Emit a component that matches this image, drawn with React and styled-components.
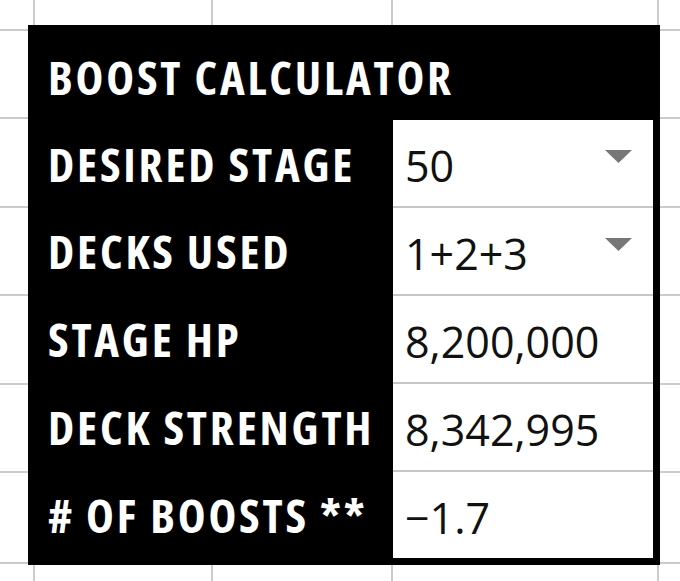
import React from 'react';
import styled, { createGlobalStyle } from 'styled-components';

const GlobalStyle = createGlobalStyle`
  body {
    margin: 0;
    background: #fff;
  }
`;

const gridLine = '#cbcbcb';
const vLine = (x) =>
  `linear-gradient(to right, transparent ${x}px, ${gridLine} ${x}px, ${gridLine} ${x + 2}px, transparent ${x + 2}px)`;
const hLine = (y) =>
  `linear-gradient(to bottom, transparent ${y}px, ${gridLine} ${y}px, ${gridLine} ${y + 2}px, transparent ${y + 2}px)`;

const Sheet = styled.div`
  width: 680px;
  height: 581px;
  box-sizing: border-box;
  padding: 25px 0 0 28px;
  overflow: hidden;
  background-color: #fff;
  background-image: ${[33, 211, 391, 657].map(vLine).join(', ')},
    ${[29, 117, 206, 294, 383, 471, 562].map(hLine).join(', ')};
`;

const Panel = styled.div`
  width: 632px;
  height: 540px;
  box-sizing: border-box;
  padding: 0 7px 7px 0;
  background: #000;
  display: grid;
  grid-template-columns: 365px 260px;
  grid-template-rows: 95px 86px 88px 88px 88px 88px;
  font-family: 'Open Sans', 'DejaVu Sans', sans-serif;
  font-stretch: 75%;
  font-weight: 700;
  letter-spacing: 2.8px;
  color: #fff;
`;

const Title = styled.div`
  grid-column: 1 / span 2;
  display: flex;
  align-items: center;
  padding: 9px 0 0 20px;
  font-size: 47px;
  line-height: 1;
`;

const Label = styled.div`
  display: flex;
  align-items: center;
  padding: 3px 0 0 20px;
  font-size: 47px;
  line-height: 1;
  white-space: nowrap;
`;

const Cell = styled.div`
  display: flex;
  align-items: center;
  box-sizing: border-box;
  padding: 4px 21px 0 12px;
  background: #fff;
  border-top: ${(p) => (p.first ? 'none' : '2px solid #c6c6c6')};
  font-family: 'Open Sans', 'Noto Sans', sans-serif;
  font-stretch: 100%;
  font-weight: 370;
  font-size: 43px;
  letter-spacing: 0;
  line-height: 1;
  color: #111;
`;

const Caret = styled.svg`
  margin-left: auto;
  margin-bottom: 18px;
  flex-shrink: 0;
`;

const DropArrow = () => (
  <Caret width="27" height="13" viewBox="0 0 27 13">
    <polygon points="0,0 27,0 13.5,13" fill="#777" />
  </Caret>
);

const rows = [
  { label: 'DESIRED STAGE', value: '50', select: true },
  { label: 'DECKS USED', value: '1+2+3', select: true },
  { label: 'STAGE HP', value: '8,200,000' },
  { label: 'DECK STRENGTH', value: '8,342,995' },
  { label: '# OF BOOSTS **', value: '\u22121.7' },
];

export default function App() {
  return (
    <Sheet>
      <GlobalStyle />
      <Panel>
        <Title>BOOST CALCULATOR</Title>
        {rows.map((row, i) => (
          <React.Fragment key={row.label}>
            <Label>{row.label}</Label>
            <Cell first={i === 0}>
              {row.value}
              {row.select && <DropArrow />}
            </Cell>
          </React.Fragment>
        ))}
      </Panel>
    </Sheet>
  );
}
